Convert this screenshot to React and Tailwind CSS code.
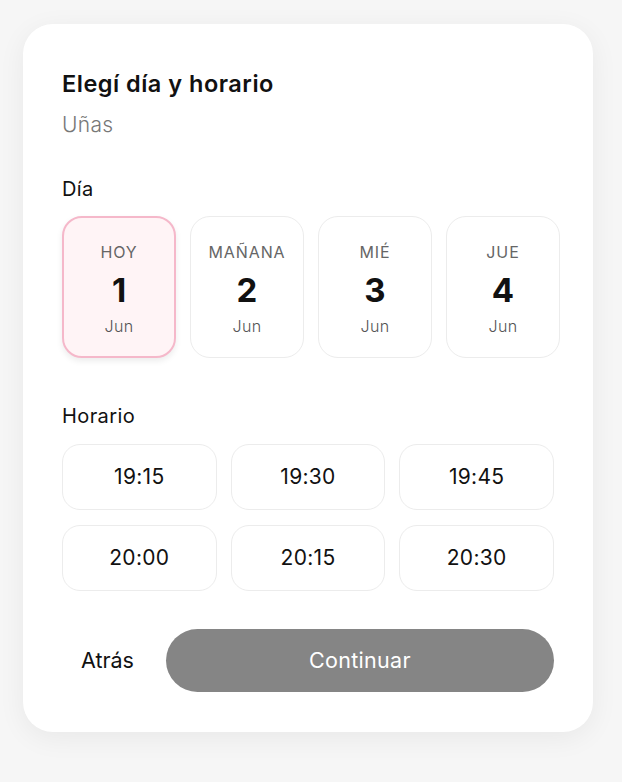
import React, { useState } from "react";

const days = [
  { label: "HOY", num: "1", month: "Jun" },
  { label: "MAÑANA", num: "2", month: "Jun" },
  { label: "MIÉ", num: "3", month: "Jun" },
  { label: "JUE", num: "4", month: "Jun" },
];

const times = ["19:15", "19:30", "19:45", "20:00", "20:15", "20:30"];

export default function App() {
  const [day, setDay] = useState(0);
  const [time, setTime] = useState(null);

  return (
    <div className="min-h-screen bg-[#f6f6f6] px-[23px] pt-[24px] font-['Inter','Liberation_Sans',sans-serif]">
      <div className="w-[570px] bg-white rounded-[30px] shadow-[0_6px_28px_rgba(0,0,0,0.06)] px-[39px] pt-[44px] pb-[40px]">
        {/* Header */}
        <h1 className="text-[23.5px] leading-[32px] font-semibold text-[#111] tracking-[0.5px]">
          Elegí día y horario
        </h1>
        <p className="mt-[11px] text-[21px] leading-[28px] font-light text-[#777] tracking-[0.3px]">Uñas</p>

        {/* Day */}
        <h2 className="mt-[37px] text-[20px] leading-[26px] text-[#111] tracking-[0.4px]">Día</h2>
        <div className="mt-[14px] flex gap-[14px] w-[498px]">
          {days.map((d, i) => (
            <button
              key={d.label}
              onClick={() => setDay(i)}
              className={
                i === day
                  ? "w-[114px] h-[142px] shrink-0 rounded-[20px] border-[2.5px] border-[#f5b8ca] bg-[#fff4f6] shadow-[0_3px_6px_rgba(0,0,0,0.08)] flex flex-col items-center pt-[24px]"
                  : "w-[114px] h-[142px] shrink-0 rounded-[20px] border-[1.5px] border-[#ececec] bg-white flex flex-col items-center pt-[25px]"
              }
            >
              <span className="text-[16px] leading-[20px] text-[#666] tracking-[0.9px]">{d.label}</span>
              <span className="mt-[9px] text-[33px] leading-[38px] font-bold text-[#111]">{d.num}</span>
              <span className="mt-[7px] text-[16px] leading-[20px] font-light text-[#555] tracking-[0.3px]">{d.month}</span>
            </button>
          ))}
        </div>

        {/* Time */}
        <h2 className="mt-[45px] text-[20px] leading-[26px] text-[#111] tracking-[0.4px]">Horario</h2>
        <div className="mt-[15px] grid grid-cols-3 gap-x-[14px] gap-y-[15px]">
          {times.map((t) => (
            <button
              key={t}
              onClick={() => setTime(t)}
              className={
                t === time
                  ? "h-[66px] rounded-[18px] border-[2px] border-[#f5b8ca] bg-[#fff4f6] text-[21px] text-[#111] tracking-[0.3px]"
                  : "h-[66px] rounded-[18px] border-[1.5px] border-[#ececec] bg-white text-[21px] text-[#111] tracking-[0.3px]"
              }
            >
              {t}
            </button>
          ))}
        </div>

        {/* Actions */}
        <div className="mt-[38px] flex items-center gap-[13px]">
          <button className="px-[19px] text-[21.5px] text-[#111]">Atrás</button>
          <button className="flex-1 h-[63px] rounded-full bg-[#858585] text-white text-[21.5px] tracking-[0.3px]">
            Continuar
          </button>
        </div>
      </div>
    </div>
  );
}
